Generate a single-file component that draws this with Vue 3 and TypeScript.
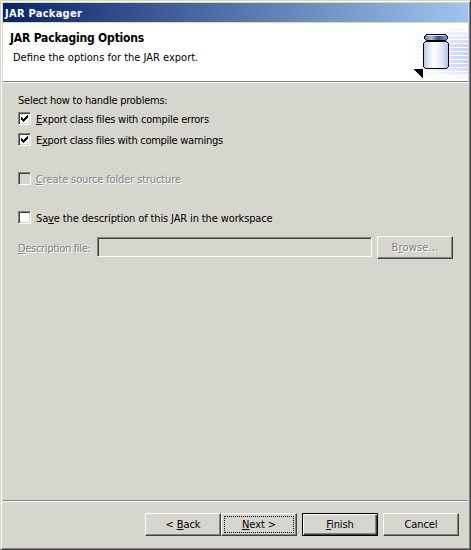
<script setup lang="ts">
import { ref } from 'vue'

interface Option {
  id: string
  before: string
  key: string
  after: string
  checked: boolean
  disabled?: boolean
}

const options = ref<Option[]>([
  { id: 'errors', before: '', key: 'E', after: 'xport class files with compile errors', checked: true },
  { id: 'warnings', before: 'E', key: 'x', after: 'port class files with compile warnings', checked: true },
  { id: 'source', before: '', key: 'C', after: 'reate source folder structure', checked: false, disabled: true },
  { id: 'save', before: 'Sa', key: 'v', after: 'e the description of this JAR in the workspace', checked: false },
])

function toggle(o: Option) {
  if (!o.disabled) o.checked = !o.checked
}

const stripes = Array.from({ length: 12 }, (_, i) => 31 + i * 4)
</script>

<template>
  <div class="window">
    <div class="titlebar"><span>JAR Packager</span></div>
    <header class="banner">
      <div class="heading">
        <h1>JAR Packaging Options</h1>
        <p>Define the options for the JAR export.</p>
      </div>
      <svg class="art" width="58" height="58" viewBox="410 23 58 58" shape-rendering="crispEdges">
        <defs>
          <linearGradient id="fade" x1="0" x2="1" y1="0" y2="0">
            <stop offset="0" stop-color="#fff" />
            <stop offset="0.3" stop-color="#f0f3fc" />
            <stop offset="0.65" stop-color="#dce4f8" />
            <stop offset="1" stop-color="#c6d3f2" />
          </linearGradient>
          <linearGradient id="edges" x1="0" x2="0" y1="0" y2="1">
            <stop offset="0" stop-color="#fff" />
            <stop offset="0.35" stop-color="#fff" stop-opacity="0" />
            <stop offset="0.75" stop-color="#fff" stop-opacity="0" />
            <stop offset="1" stop-color="#fff" />
          </linearGradient>
          <linearGradient id="glass" x1="0" x2="1" y1="0" y2="0">
            <stop offset="0" stop-color="#c0c9e0" />
            <stop offset="0.2" stop-color="#e4e8f4" />
            <stop offset="0.4" stop-color="#ffffff" />
            <stop offset="0.75" stop-color="#e2e6f4" />
            <stop offset="1" stop-color="#b9c3dc" />
          </linearGradient>
          <linearGradient id="lid" x1="0" x2="1" y1="0" y2="0">
            <stop offset="0" stop-color="#6583b5" />
            <stop offset="0.3" stop-color="#a9bddd" />
            <stop offset="0.6" stop-color="#31548f" />
            <stop offset="1" stop-color="#7f9ac6" />
          </linearGradient>
        </defs>
        <rect x="412" y="26" width="56" height="54" fill="url(#fade)" />
        <rect v-for="y in stripes" :key="y" x="412" :y="y" width="56" height="1" fill="#fff" />
        <rect x="412" y="26" width="56" height="54" fill="url(#edges)" />
        <path d="M413 69h10v10z" fill="#000" />
        <path d="M425 41h22v1h1v1h1v24h-1v1h-1v1h-22v-1h-1v-1h-1v-24h1v-1h1z" fill="#000" />
        <path d="M425 42h22v1h1v24h-1v1h-22v-1h-1v-24h1z" fill="url(#glass)" />
        <path d="M426 34h20v1h1v1h1v3h-1v1h-1v2h-20v-2h-1v-1h-1v-3h1v-1h1z" fill="#000" />
        <path d="M426 35h20v1h1v3h-1v1h-20v-1h-1v-3h1z" fill="url(#lid)" />
        <path d="M427 35h18v1h-18z" fill="#dbe4f3" />
      </svg>
    </header>

    <main class="page">
      <p class="prompt">Select how to handle problems:</p>
      <div
        v-for="o in options"
        :key="o.id"
        class="option"
        :class="[o.id, { disabled: o.disabled }]"
        role="checkbox"
        :aria-checked="o.checked"
        @click="toggle(o)"
      >
        <span class="box">
          <svg v-if="o.checked" width="7" height="7" viewBox="0 0 7 7" shape-rendering="crispEdges">
            <path d="M0 2h1v1h1v1h1v-1h1v-1h1v-1h1v-1h1v3h-1v1h-1v1h-1v1h-1v1h-1v-1h-1v-1h-1z" />
          </svg>
        </span>
        <span class="text">{{ o.before }}<u>{{ o.key }}</u>{{ o.after }}</span>
      </div>
      <div class="file-row">
        <span class="text disabled"><u>D</u>escription file:</span>
        <input class="field" disabled />
        <button class="btn browse" disabled><span>B<u>r</u>owse...</span></button>
      </div>
    </main>

    <footer class="actions">
      <button class="btn"><span>&lt; <u>B</u>ack</span></button>
      <button class="btn focus"><span><u>N</u>ext &gt;</span></button>
      <button class="btn primary"><span><u>F</u>inish</span></button>
      <button class="btn"><span>Cancel</span></button>
    </footer>
  </div>
</template>

<style>
body {
  margin: 0;
  overflow: hidden;
}
</style>

<style scoped>
.window {
  box-sizing: border-box;
  width: 471px;
  height: 550px;
  display: flex;
  flex-direction: column;
  padding: 1px;
  background: #d6d6ce;
  border: 1px solid;
  border-color: #d6d6ce #424142 #424142 #d6d6ce;
  box-shadow: inset 1px 1px #fff, inset -1px -1px #848284;
  font: 11px/13px "DejaVu Sans Condensed", "DejaVu Sans", "Noto Sans", sans-serif;
  font-stretch: condensed;
  color: #000;
}
.titlebar {
  box-sizing: border-box;
  height: 19px;
  margin: 1px 1px 0;
  padding: 4px 0 0 2px;
  background: linear-gradient(90deg, #0a246a, #a0c4ee);
  color: #fff;
  font-weight: bold;
  letter-spacing: 0.27px;
  white-space: nowrap;
}
.banner {
  display: flex;
  justify-content: space-between;
  height: 58px;
  margin: 1px 1px 0;
  background: #fff;
  border-bottom: 1px solid #848284;
  box-shadow: 0 1px #fff;
}
.heading {
  padding: 8px 0 0 7px;
}
h1 {
  margin: 0;
  font-size: 12px;
  line-height: 14px;
  letter-spacing: -0.19px;
}
p {
  margin: 0;
  white-space: nowrap;
}
.heading p {
  margin: 6px 0 0 3px;
}
.art {
  display: block;
}
.page {
  flex: 1;
  display: flex;
  flex-direction: column;
  padding: 12px 15px 0 16px;
}
.prompt {
  height: 18px;
  letter-spacing: -0.24px;
}
.option {
  display: flex;
  align-items: center;
  gap: 5px;
  height: 13px;
  white-space: nowrap;
}
.option .text {
  padding-top: 2px;
}
.option.errors {
  letter-spacing: -0.24px;
}
.option.warnings {
  margin-top: 8px;
  letter-spacing: -0.27px;
}
.option.source,
.option.save {
  margin-top: 26px;
  letter-spacing: -0.13px;
}
.box {
  box-sizing: border-box;
  width: 13px;
  height: 13px;
  padding: 2px 0 0 2px;
  border: 1px solid;
  border-color: #848284 #fff #fff #848284;
  box-shadow: inset 1px 1px #424142, inset -1px -1px #d6d6ce;
  background: #fff;
}
.box svg {
  display: block;
}
.disabled .box {
  background: #d6d6ce;
}
.text {
  white-space: nowrap;
}
.disabled .text,
.text.disabled,
.btn:disabled {
  color: #848284;
  text-shadow: 1px 1px #fff;
}
u {
  text-decoration: underline;
  text-decoration-thickness: 1px;
  text-underline-offset: 1px;
  text-decoration-skip-ink: none;
}
.file-row {
  display: flex;
  align-items: center;
  margin-top: 12px;
}
.file-row .text {
  width: 80px;
  padding-top: 2px;
  letter-spacing: -0.32px;
}
.field {
  box-sizing: border-box;
  align-self: flex-start;
  width: 275px;
  height: 20px;
  margin: 1px 5px 0 -1px;
  padding: 0 3px;
  border: 1px solid;
  border-color: #848284 #fff #fff #848284;
  box-shadow: inset 1px 1px #424142;
  background: #d6d6ce;
  font: inherit;
}
.btn {
  box-sizing: border-box;
  flex: none;
  width: 76px;
  height: 23px;
  padding: 0 0 1px;
  border: 1px solid;
  border-color: #fff #424142 #424142 #fff;
  box-shadow: inset -1px -1px #848284;
  background: #d6d6ce;
  border-radius: 0;
  font: inherit;
  color: #000;
}
.browse {
  letter-spacing: 0.15px;
}
.actions {
  box-sizing: border-box;
  display: flex;
  height: 48px;
  margin: 0 1px;
  padding: 12px 8px 0 0;
  justify-content: flex-end;
  border-top: 1px solid #848284;
  box-shadow: inset 0 1px #fff;
}
.actions .btn {
  position: relative;
  letter-spacing: -0.1px;
}
.actions {
  padding-right: 9px;
}
.focus {
  outline: 1px dotted #000;
  outline-offset: -4px;
}
.primary {
  margin: 0 5px;
  border-color: #000;
  box-shadow: inset 1px 1px #fff, inset -1px -1px #424142, inset -2px -2px #848284;
}
</style>
